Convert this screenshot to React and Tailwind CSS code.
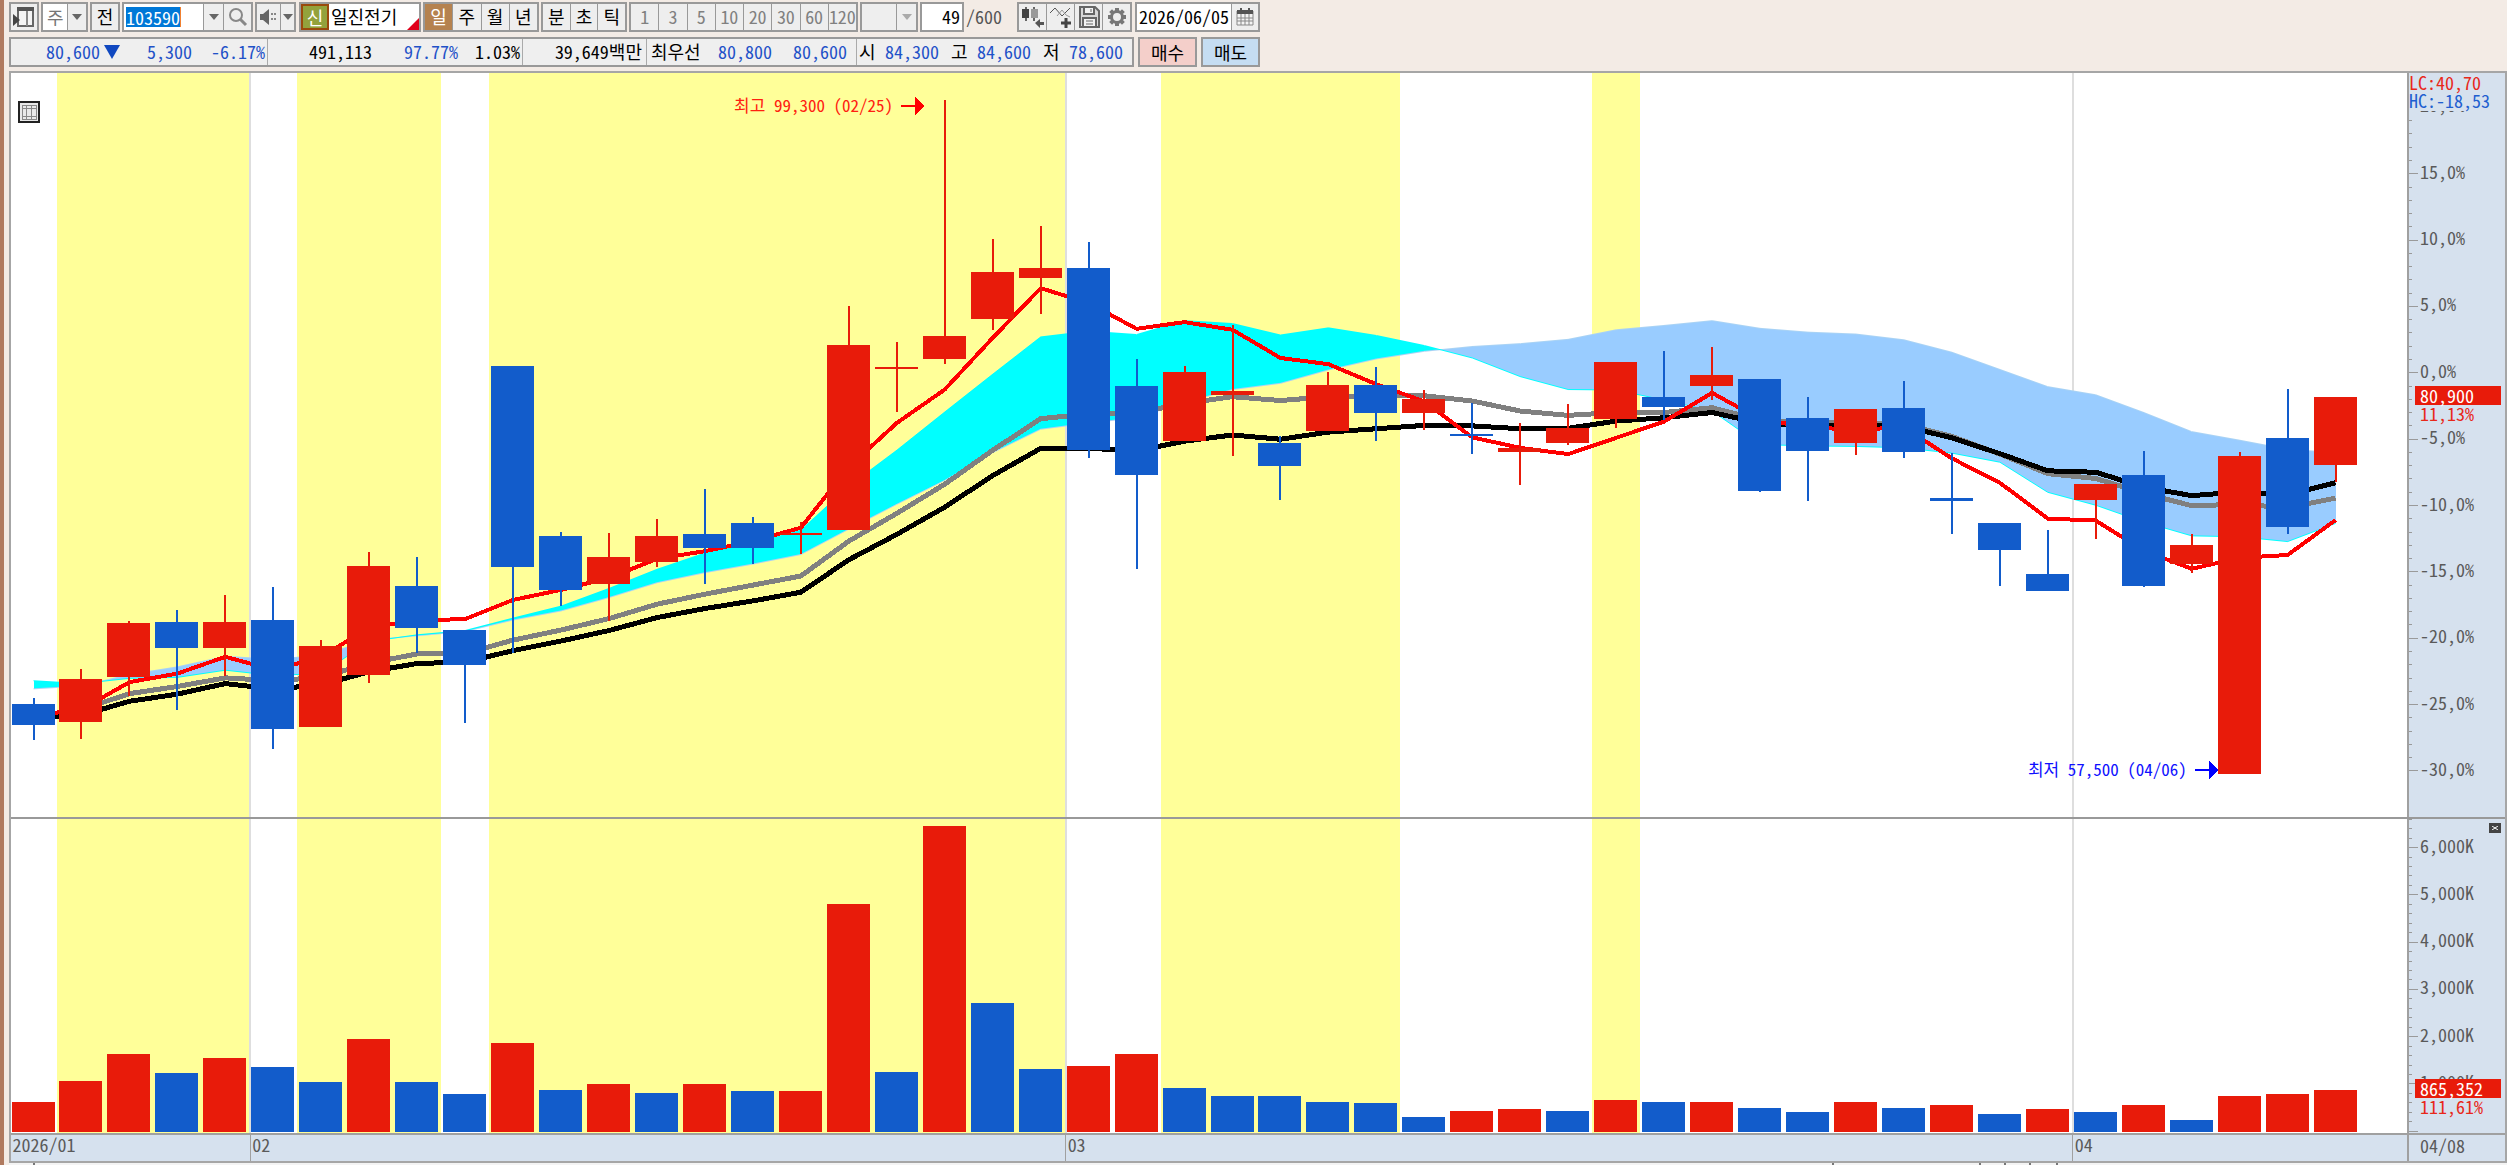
import React, { useState } from 'react';

const STEP = 47.96;
const FIRST = 22.5;
const cx = (i) => FIRST + i * STEP;

const RED = '#e81b0a';
const BLUE = '#125ccb';

// [colour, body top, body bottom, high, low] in price plot units, y grows downwards
const CANDLES = [
  ['B', 1326, 1369, 1314, 1401],
  ['R', 1273, 1363, 1253, 1398],
  ['R', 1157, 1269, 1153, 1309],
  ['B', 1154, 1209, 1129, 1338],
  ['R', 1154, 1209, 1097, 1268],
  ['B', 1151, 1379, 1081, 1420],
  ['R', 1204, 1373, 1191, 1373],
  ['R', 1038, 1266, 1007, 1282],
  ['B', 1079, 1166, 1019, 1220],
  ['B', 1170, 1244, 1170, 1366],
  ['B', 618, 1040, 618, 1218],
  ['B', 975, 1087, 965, 1120],
  ['R', 1019, 1075, 968, 1153],
  ['R', 975, 1028, 938, 1039],
  ['B', 971, 999, 875, 1075],
  ['B', 947, 999, 934, 1032],
  ['R', 969, 973, 944, 1013],
  ['R', 574, 962, 494, 962],
  ['R', 621, 625, 568, 714],
  ['R', 555, 604, 62, 614],
  ['R', 423, 520, 353, 544],
  ['R', 414, 435, 325, 510],
  ['B', 414, 795, 360, 811],
  ['B', 661, 846, 604, 1043],
  ['R', 632, 776, 618, 776],
  ['R', 671, 679, 533, 808],
  ['B', 780, 827, 765, 899],
  ['R', 658, 754, 632, 754],
  ['B', 658, 717, 620, 776],
  ['R', 688, 717, 670, 752],
  ['B', 762, 764, 697, 802],
  ['R', 790, 799, 739, 868],
  ['R', 748, 780, 698, 783],
  ['R', 611, 729, 611, 748],
  ['B', 684, 705, 588, 732],
  ['R', 637, 661, 580, 689],
  ['B', 645, 880, 645, 883],
  ['B', 727, 796, 684, 902],
  ['R', 709, 780, 709, 804],
  ['B', 706, 799, 651, 811],
  ['B', 894, 902, 800, 971],
  ['B', 947, 1003, 947, 1078],
  ['B', 1053, 1090, 962, 1090],
  ['R', 865, 899, 865, 981],
  ['B', 847, 1078, 796, 1080],
  ['R', 994, 1032, 971, 1052],
  ['R', 806, 1472, 799, 1472],
  ['B', 770, 956, 667, 971],
  ['R', 684, 826, 684, 862],
];

const MA_RED = [
  1350, 1337, 1280, 1262, 1227, 1254, 1228, 1165, 1151, 1148, 1108, 1087, 1062, 1022, 1006, 985, 957,
  830, 738, 668, 560, 456, 487, 541, 527, 543, 602, 615, 657, 693, 768, 790, 803, 769, 735, 675, 730,
  747, 752, 747, 812, 863, 938, 942, 1005, 1043, 1020, 1014, 941,
];
const MA_BLACK = [
  1355, 1349, 1320, 1305, 1283, 1294, 1286, 1258, 1241, 1238, 1214, 1194, 1172, 1145, 1126, 1110, 1092,
  1024, 971, 914, 848, 791, 791, 796, 776, 763, 772, 757, 750, 743, 744, 750, 749, 734, 727, 716, 738,
  745, 742, 745, 769, 802, 838, 841, 872, 890, 882, 888, 863,
];
const MA_GRAY = [
  1352, 1337, 1304, 1289, 1271, 1277, 1270, 1240, 1221, 1220, 1192, 1171, 1147, 1117, 1096, 1077, 1058,
  985, 927, 866, 795, 729, 719, 717, 697, 683, 691, 683, 681, 681, 692, 713, 722, 716, 716, 706, 732,
  738, 737, 741, 766, 803, 844, 854, 885, 911, 908, 915, 895,
];
const SPAN_A = [
  1277, 1283, 1272, 1270, 1255, 1266, 1262, 1195, 1181, 1172, 1146, 1121, 1084, 1044, 1010, 990, 962,
  870, 795, 715, 636, 558, 546, 553, 524, 530, 554, 539, 555, 576, 602, 641, 668, 669, 690, 713, 783,
  786, 787, 790, 801, 820, 883, 910, 945, 974, 976, 986, 948,
];
const SPAN_B = [
  1294, 1288, 1264, 1248, 1226, 1232, 1224, 1192, 1183, 1174, 1150, 1131, 1103, 1072, 1051, 1033, 1013,
  960, 908, 858, 800, 751, 738, 727, 695, 668, 655, 627, 604, 588, 578, 572, 563, 543, 534, 524, 540,
  548, 552, 564, 590, 626, 662, 679, 716, 756, 774, 793, 800,
];

// thousands of shares
const VOLUMES = [
  635, 1079, 1657, 1241, 1558, 1368, 1050, 1974, 1050, 797, 1875, 888, 1015, 825, 1015, 860, 862, 4829,
  1276, 6479, 2735, 1340, 1403, 1657, 924, 768, 767, 635, 606, 324, 451, 479, 451, 670, 635, 638, 515,
  416, 642, 515, 578, 388, 479, 416, 578, 254, 768, 797, 895,
];

// first and last candle of each highlighted stretch
const BANDS = [
  [1, 4],
  [6, 8],
  [10, 21],
  [24, 28],
  [33, 33],
];

const MONTHS = [
  { label: '2026/01', at: 0 },
  { label: '02', at: 5 },
  { label: '03', at: 22 },
  { label: '04', at: 43 },
];

const toPoints = (values) => values.map((v, i) => `${cx(i)},${v}`).join(' ');

const buildCloud = () => {
  const parts = [];
  for (let i = 0; i < SPAN_A.length - 1; i += 1) {
    const [a0, a1, b0, b1] = [SPAN_A[i], SPAN_A[i + 1], SPAN_B[i], SPAN_B[i + 1]];
    const [x0, x1] = [cx(i), cx(i + 1)];
    const d0 = b0 - a0;
    const d1 = b1 - a1;
    const fill = (d) => (d > 0 ? '#00ffff' : '#99ccff');
    if (d0 * d1 >= 0) {
      parts.push({ fill: fill(d0 + d1), points: `${x0},${a0} ${x1},${a1} ${x1},${b1} ${x0},${b0}` });
    } else {
      const t = d0 / (d0 - d1);
      const xm = x0 + (x1 - x0) * t;
      const ym = a0 + (a1 - a0) * t;
      parts.push({ fill: fill(d0), points: `${x0},${a0} ${xm},${ym} ${x0},${b0}` });
      parts.push({ fill: fill(d1), points: `${x1},${a1} ${xm},${ym} ${x1},${b1}` });
    }
  }
  return parts;
};

const CLOUD = buildCloud();

const Backdrop = ({ y, height }) => (
  <>
    {BANDS.map(([from, to]) => (
      <rect
        key={from}
        x={cx(from) - STEP / 2}
        y={y}
        width={(to - from + 1) * STEP}
        height={height}
        fill="#ffff99"
      />
    ))}
    {MONTHS.slice(1).map((m) => (
      <line
        key={m.label}
        x1={cx(m.at) - STEP / 2 + 1}
        x2={cx(m.at) - STEP / 2 + 1}
        y1={y}
        y2={y + height}
        stroke="#dedede"
        strokeWidth="2"
        vectorEffect="non-scaling-stroke"
      />
    ))}
  </>
);

const Trend = ({ values, color, width }) => (
  <polyline
    points={toPoints(values)}
    fill="none"
    stroke={color}
    strokeWidth={width}
    strokeLinejoin="round"
    vectorEffect="non-scaling-stroke"
  />
);

const PricePlot = () => (
  <svg
    viewBox="0 6 2396 1556"
    preserveAspectRatio="none"
    shapeRendering="crispEdges"
    className="absolute inset-0 h-full w-full"
    role="img"
    aria-label="일진전기 주가"
  >
    <Backdrop y={6} height={1556} />
    {CLOUD.map((part, i) => (
      <polygon key={i} points={part.points} fill={part.fill} />
    ))}
    <Trend values={SPAN_B} color="#a9d3f5" width={1} />
    <Trend values={SPAN_A} color="#00ffff" width={1} />
    <Trend values={MA_GRAY} color="#808080" width={5} />
    <Trend values={MA_BLACK} color="#000000" width={5} />
    <Trend values={MA_RED} color="#ff0000" width={4} />
    {CANDLES.map(([tone, top, bottom, high, low], i) => {
      const color = tone === 'R' ? RED : BLUE;
      return (
        <g key={i} fill={color}>
          <rect x={cx(i) - 1} y={high} width="2" height={low - high} />
          <rect x={cx(i) - 22} y={top} width="43" height={Math.max(bottom - top, 4)} />
        </g>
      );
    })}
  </svg>
);

const VolumePlot = () => (
  <svg
    viewBox="0 0 2396 6643"
    preserveAspectRatio="none"
    shapeRendering="crispEdges"
    className="absolute inset-0 h-full w-full"
    role="img"
    aria-label="거래량"
  >
    <Backdrop y={0} height={6643} />
    {VOLUMES.map((v, i) => (
      <rect
        key={i}
        x={cx(i) - 22}
        y={6622 - v}
        width="43"
        height={v}
        fill={i > 0 && v < VOLUMES[i - 1] ? BLUE : RED}
      />
    ))}
  </svg>
);

const Axis = ({ ticks }) => (
  <svg className="absolute inset-0 h-full w-full" shapeRendering="crispEdges">
    {ticks.map(({ at, label, major }) => (
      <g key={at}>
        <line x1="0" x2={major ? 9 : 3} y1={`${at}%`} y2={`${at}%`} stroke="#9a9a9a" />
        {label && (
          <text x="11" y={`${at}%`} dy="5" fill="#5a5a5a">
            {label}
          </text>
        )}
      </g>
    ))}
  </svg>
);

const priceTicks = [];
for (let p = 20; p >= -30; p -= 1) {
  const major = p % 5 === 0;
  priceTicks.push({
    at: ((299.8 - p * 13.27) / 744) * 100,
    major,
    label: major ? `${p},0%` : null,
  });
}

const volumeTicks = [];
for (let v = 0; v <= 6600; v += 200) {
  const major = v % 1000 === 0;
  volumeTicks.push({
    at: ((312.2 - v * 0.04727) / 314) * 100,
    major,
    label: major && v > 0 ? `${v / 1000},000K` : null,
  });
}

const Tag = ({ value, percent, className }) => (
  <div className={`absolute right-1 left-[6px] ${className}`}>
    <div className="bg-[#e81b0a] px-[5px] leading-[19px] text-white">{value}</div>
    <div className="px-[5px] leading-[16px] text-[#e8281a]">{percent}</div>
  </div>
);

const Group = ({ className = '', children }) => (
  <div className={`flex h-[30px] divide-x divide-[#999] border-2 border-[#999] bg-[#eee] ${className}`}>
    {children}
  </div>
);

const IconButton = ({ label, className = 'flex-1', children }) => (
  <button type="button" aria-label={label} className={`flex items-center justify-center ${className}`}>
    {children}
  </button>
);

const Periods = ({ items, value, onChange, className, tone = 'text-black' }) => (
  <Group className={className}>
    {items.map((item) => (
      <button
        key={item}
        type="button"
        onClick={() => onChange(item)}
        className={`flex w-0 flex-1 items-center justify-center pb-[2px] whitespace-nowrap ${
          value === item ? 'bg-[#b5824f] text-white' : tone
        }`}
      >
        {item}
      </button>
    ))}
  </Group>
);

const Caret = ({ color = '#666' }) => (
  <svg width="10" height="6" viewBox="0 0 10 6" className="pointer-events-none">
    <path d="M0 0h10L5 6z" fill={color} />
  </svg>
);

const PanelIcon = () => (
  <svg width="24" height="22" viewBox="0 0 24 22">
    <path d="M6 2h15v18H6z" fill="#f4f4f4" stroke="#666" strokeWidth="2" />
    <path d="M5 1h17v4H5z" fill="#555" />
    <path d="M15 5v15" stroke="#888" strokeWidth="2" />
    <path d="M1 8l7 6-7 6z" fill="#444" />
  </svg>
);

const SearchIcon = () => (
  <svg width="20" height="20" viewBox="0 0 20 20" fill="none" stroke="#888">
    <circle cx="8" cy="8" r="6" strokeWidth="2" />
    <path d="M12 12l6 6" strokeWidth="3" />
  </svg>
);

const SpeakerIcon = () => (
  <svg width="20" height="20" viewBox="0 0 20 20">
    <path d="M1 7h3l6-5v16l-6-5H1z" fill="#666" />
    <path d="M12 6h2v2h-2zM15 6h2v2h-2zM12 11h2v2h-2zM15 11h2v2h-2z" fill="#888" />
  </svg>
);

const CandleAddIcon = () => (
  <svg width="24" height="24" viewBox="0 0 24 24">
    <path d="M5 2v14M13 2v14" stroke="#666" strokeWidth="2" />
    <path d="M1 4h7v9H1z" fill="#444" />
    <path d="M10 4h7v9h-7z" fill="#999" />
    <path d="M14 18l5-4v3h4v3h-4v3z" fill="#555" />
  </svg>
);

const LineAddIcon = () => (
  <svg width="24" height="24" viewBox="0 0 24 24" fill="none">
    <path d="M1 8l5-5 7 8 4-4 4-4" stroke="#555" strokeWidth="1" />
    <path d="M8 11l5-6 4 5 4 2" stroke="#999" strokeWidth="1" />
    <path d="M17 13v10M12 18h10" stroke="#444" strokeWidth="3" />
  </svg>
);

const SaveIcon = () => (
  <svg width="22" height="22" viewBox="0 0 22 22" fill="#d8d8d8" stroke="#666" strokeWidth="2">
    <path d="M2 1h15l4 4v16H2z" />
    <path d="M6 1h10v7H6zM5 12h13v9H5z" fill="#f2f2f2" />
    <path d="M13 3v3M8 15h7M8 18h7" strokeWidth="1" />
  </svg>
);

const GearIcon = () => (
  <svg width="20" height="20" viewBox="0 0 20 20" fill="none" stroke="#777">
    <circle cx="10" cy="10" r="5.5" strokeWidth="3" />
    <path
      d="M10 1v3M10 16v3M1 10h3M16 10h3M3.6 3.6l2 2M14.4 14.4l2 2M3.6 16.4l2-2M14.4 5.6l2-2"
      strokeWidth="4"
    />
  </svg>
);

const CalendarIcon = () => (
  <svg width="18" height="18" viewBox="0 0 18 18">
    <path d="M1 3h16v14H1z" fill="#f4f4f4" stroke="#888" />
    <path d="M1 2h16v4H1zM4 0h2v3H4zM12 0h2v3h-2z" fill="#555" />
    <path d="M1 10h16M1 13h16M5 6v11M9 6v11M13 6v11" stroke="#888" />
  </svg>
);

const GridIcon = () => (
  <svg width="22" height="22" viewBox="0 0 22 22" shapeRendering="crispEdges">
    <path d="M1 1h20v20H1z" fill="#e8e8e8" stroke="#222" strokeWidth="2" />
    <path d="M4 4h14v14H4zM4 7h14M4 15h14M8 4v14M13 4v14" fill="none" stroke="#888" />
  </svg>
);

const Toolbar = () => {
  const [period, setPeriod] = useState('일');
  const [minute, setMinute] = useState(null);
  const [code, setCode] = useState('103590');

  return (
    <div className="flex items-start gap-0.5">
      <Group className="w-[30px]">
        <IconButton label="패널 열기">
          <PanelIcon />
        </IconButton>
      </Group>
      <div className="relative h-[30px] w-[47px] border-2 border-[#999] bg-[#eee]">
        <select
          aria-label="차트 종류"
          className="h-full w-full appearance-none bg-[linear-gradient(90deg,#fff_24px,#999_24px,#999_25px,#eee_25px)] pl-[4px] text-[#777]"
        >
          <option>주</option>
        </select>
        <span className="pointer-events-none absolute top-[10px] right-[4px]">
          <Caret />
        </span>
      </div>
      <Group className="w-[30px]">
        <button type="button" className="flex-1 pb-[2px]">
          전
        </button>
      </Group>
      <Group className="w-[131px]">
        <div className="flex w-[80px] items-center bg-white pl-[2px]">
          <input
            aria-label="종목코드"
            value={code}
            onChange={(e) => setCode(e.target.value)}
            className="h-[20px] w-[55px] border-r border-[#f08030] bg-[#0078d7] text-white outline-none"
          />
        </div>
        <IconButton label="최근 종목" className="w-[20px]">
          <Caret />
        </IconButton>
        <IconButton label="종목 검색">
          <SearchIcon />
        </IconButton>
      </Group>
      <Group className="mr-px w-[41px]">
        <IconButton label="소리" className="w-[24px]">
          <SpeakerIcon />
        </IconButton>
        <IconButton label="소리 설정">
          <Caret />
        </IconButton>
      </Group>
      <Group className="w-[122px]">
        <span className="flex w-[28px] items-center justify-center border-2 border-[#9a4a0c] bg-[#93a23c] text-white">
          신
        </span>
        <span className="relative flex flex-1 items-center bg-white pb-[2px] pl-[2px]">
          일진전기
          <svg width="12" height="12" viewBox="0 0 12 12" className="absolute right-0 bottom-0">
            <path d="M12 0v12H0z" fill="#e0001b" />
          </svg>
        </span>
      </Group>
      <Periods items={['일', '주', '월', '년']} value={period} onChange={setPeriod} className="w-[116px]" />
      <Periods items={['분', '초', '틱']} value={period} onChange={setPeriod} className="w-[86px]" />
      <Periods
        items={['1', '3', '5', '10', '20', '30', '60', '120']}
        value={minute}
        onChange={setMinute}
        className="w-[229px]"
        tone="text-[#808080]"
      />
      <div className="relative h-[30px] w-[58px] border-2 border-[#999] bg-[#eee]">
        <select
          aria-label="사용자 주기"
          disabled
          className="h-full w-full appearance-none bg-[linear-gradient(90deg,#eee_34px,#999_34px,#999_35px,#eee_35px)]"
        />
        <span className="pointer-events-none absolute top-[10px] right-[4px]">
          <Caret color="#aaa" />
        </span>
      </div>
      <input
        aria-label="조회 개수"
        defaultValue="49"
        className="h-[30px] w-[44px] border-2 border-[#999] bg-white pr-[2px] pb-[2px] text-right outline-none"
      />
      <span className="w-[49px] leading-[28px] text-[#555]">/600</span>
      <Group className="mr-px w-[115px]">
        <IconButton label="차트 형태">
          <CandleAddIcon />
        </IconButton>
        <IconButton label="지표 추가">
          <LineAddIcon />
        </IconButton>
        <IconButton label="저장">
          <SaveIcon />
        </IconButton>
        <IconButton label="설정">
          <GearIcon />
        </IconButton>
      </Group>
      <Group className="w-[125px]">
        <input
          aria-label="기준일"
          defaultValue="2026/06/05"
          className="w-[95px] bg-white pb-[2px] pl-[2px] outline-none"
        />
        <IconButton label="달력">
          <CalendarIcon />
        </IconButton>
      </Group>
    </div>
  );
};

const Quote = ({ label, value }) => (
  <div className="flex gap-2">
    <span className="w-[18px] text-left text-black">{label}</span>
    <span>{value}</span>
  </div>
);

const QuoteRow = () => (
  <div className="mt-[5px] flex text-right leading-[24px] whitespace-nowrap text-[#1f52c8]">
    <div className="mr-1 flex h-[30px] divide-x divide-[#aaa] border-2 border-[#999] bg-[#efefef]">
      <div className="flex pr-[2px]">
        <span className="w-[89px]">80,600</span>
        <span className="flex w-[24px] items-center justify-center">
          <svg width="16" height="14" viewBox="0 0 16 14">
            <path d="M0 0h16L8 14z" fill="#1048c0" />
          </svg>
        </span>
        <span className="w-[68px]">5,300</span>
        <span className="w-[73px]">-6.17%</span>
      </div>
      <div className="flex pr-[2px]">
        <span className="w-[104px] text-black">491,113</span>
        <span className="w-[86px]">97.77%</span>
        <span className="w-[62px] text-black">1.03%</span>
      </div>
      <div className="w-[124px] pr-[4px] text-black">39,649백만</div>
      <div className="flex pr-[9px] pl-[4px]">
        <span className="w-[54px] text-left text-black">최우선</span>
        <span className="w-[67px]">80,800</span>
        <span className="w-[75px]">80,600</span>
      </div>
      <div className="flex gap-[12px] pr-[9px] pl-[2px]">
        <Quote label="시" value="84,300" />
        <Quote label="고" value="84,600" />
        <Quote label="저" value="78,600" />
      </div>
    </div>
    <button type="button" className="mr-1 w-[59px] border-2 border-[#999] bg-[#f4cfca] text-center text-black">
      매수
    </button>
    <button type="button" className="w-[59px] border-2 border-[#999] bg-[#c5ddf2] text-center text-black">
      매도
    </button>
  </div>
);

const Arrow = ({ color }) => (
  <svg width="23" height="18" viewBox="0 0 23 18" shapeRendering="crispEdges">
    <path d="M0 8h15v2H0z" fill={color} />
    <path d="M14 0l9 9-9 9z" fill={color} />
  </svg>
);

const Note = ({ color, className, children }) => (
  <div className={`absolute flex -translate-y-1/2 items-center gap-2 text-[17px] leading-[18px] ${className}`}>
    <span className="pb-[2px]">{children}</span>
    <Arrow color={color} />
  </div>
);

const App = () => (
  <div className="flex h-screen flex-col border-l-4 border-[#b07a5f] bg-[#f3ebe5] pl-[5px] font-['Noto_Sans_Mono_CJK_KR','Noto_Sans_CJK_KR',monospace] text-[18px] leading-[18px] text-black">
    <header className="pt-[2px] pb-[4px]">
      <Toolbar />
      <QuoteRow />
    </header>

    <main className="flex min-h-0 flex-1 flex-col border-2 border-[#a6a6a6] bg-white">
      <section className="flex min-h-0 flex-[744]">
        <div className="relative min-w-0 flex-1">
          <PricePlot />
          <button type="button" aria-label="표 보기" className="absolute top-[28px] left-[7px]">
            <GridIcon />
          </button>
          <Note color="#ff0000" className="top-[4.4%] right-[61.9%] text-[#ff2010]">
            최고 99,300 (02/25)
          </Note>
          <Note color="#0000ff" className="top-[93.7%] right-[7.9%] text-[#1010ff]">
            최저 57,500 (04/06)
          </Note>
        </div>
        <div className="relative w-[98px] border-l-2 border-[#a0a0a0] bg-[#d6e1ee]">
          <Axis ticks={priceTicks} />
          <div className="absolute top-0 right-0 left-0 bg-[#d6e1ee] pb-[2px]">
            <div className="text-[#e8281a]">LC:40,70</div>
            <div className="text-[#1f5fd0]">HC:-18,53</div>
          </div>
          <Tag value="80,900" percent="11,13%" className="top-[42.1%]" />
        </div>
      </section>

      <section className="flex min-h-0 flex-[314] border-t-2 border-[#999]">
        <div className="relative min-w-0 flex-1">
          <VolumePlot />
        </div>
        <div className="relative w-[98px] border-l-2 border-[#a0a0a0] bg-[#d6e1ee]">
          <Axis ticks={volumeTicks} />
          <button
            type="button"
            aria-label="거래량 닫기"
            className="absolute top-[4px] right-1 flex h-[10px] w-[12px] items-center justify-center bg-[#444]"
          >
            <svg width="6" height="4" viewBox="0 0 6 4" stroke="#fff">
              <path d="M0 0l6 4M6 0L0 4" />
            </svg>
          </button>
          <Tag value="865,352" percent="111,61%" className="top-[82.8%]" />
        </div>
      </section>

      <footer className="flex h-[28px] shrink-0 border-t-2 border-[#a0a0a0] bg-[#d6e1ee] text-[#5a5a5a]">
        <svg className="h-full min-w-0 flex-1 overflow-visible" shapeRendering="crispEdges">
          {MONTHS.map((m, i) => {
            const x = `${((cx(m.at) - STEP / 2 + 1) / 2396) * 100}%`;
            return (
              <g key={m.label}>
                {i > 0 && <line x1={x} x2={x} y1="0" y2="100%" stroke="#a0a0a0" />}
                <text x={x} dx="2" y="17" fill="#5a5a5a">
                  {m.label}
                </text>
              </g>
            );
          })}
        </svg>
        <div className="w-[98px] border-l-2 border-[#a0a0a0] pl-[11px] leading-[20px]">04/08</div>
      </footer>
    </main>
    <svg className="h-[2px] w-full shrink-0 bg-[#f4f4f4]" shapeRendering="crispEdges">
      {[1, 73, 78.9, 79.9, 80.9, 82].map((x) => (
        <line key={x} x1={`${x}%`} x2={`${x}%`} y1="0" y2="2" stroke="#777" strokeWidth="2" />
      ))}
    </svg>
  </div>
);

export default App;
